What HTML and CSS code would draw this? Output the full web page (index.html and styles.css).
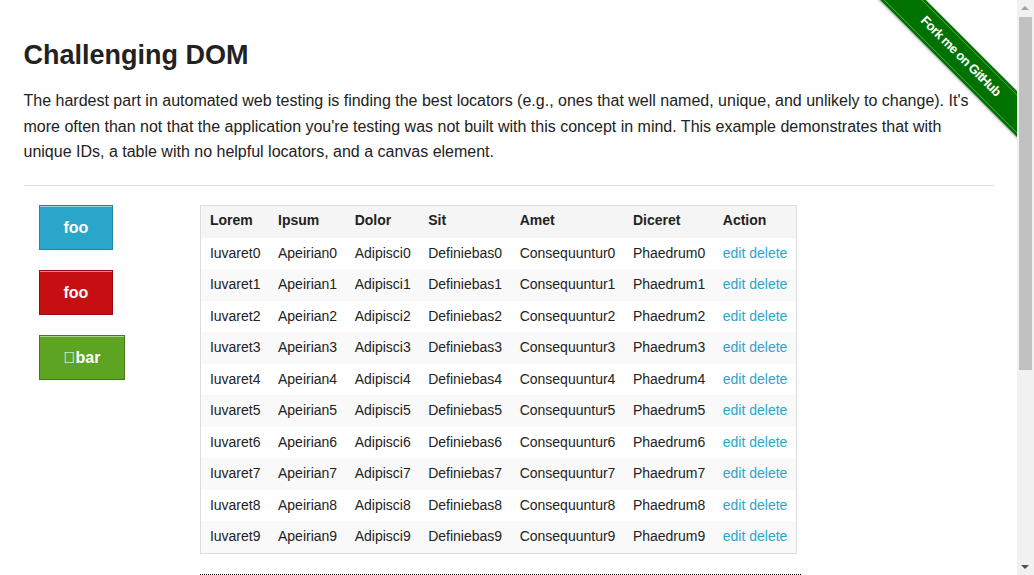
FILE: index.html
```html
<!DOCTYPE html>
<html lang="en">
<head>
<meta charset="utf-8">
<title>The Internet</title>
<link rel="stylesheet" href="styles.css">
</head>
<body>
<div class="viewport">
  <a class="ribbon-wrap" href="#"><span class="ribbon">Fork me on GitHub</span></a>
  <div class="page">
    <div class="content">
      <h3 class="title">Challenging DOM</h3>
      <p class="intro">The hardest part in automated web testing is finding the best locators (e.g., ones that well named, unique, and unlikely to change). It's more often than not that the application you're testing was not built with this concept in mind. This example demonstrates that with unique IDs, a table with no helpful locators, and a canvas element.</p>
      <hr class="rule">
      <div class="split">
        <div class="buttons">
          <a class="button" href="#">foo</a>
          <a class="button alert" href="#">foo</a>
          <a class="button success" href="#">&#xE000;bar</a>
        </div>
        <div class="main">
          <table class="grid">
            <thead>
              <tr><th>Lorem</th><th>Ipsum</th><th>Dolor</th><th>Sit</th><th>Amet</th><th>Diceret</th><th>Action</th></tr>
            </thead>
            <tbody>
              <tr><td>Iuvaret0</td><td>Apeirian0</td><td>Adipisci0</td><td>Definiebas0</td><td>Consequuntur0</td><td>Phaedrum0</td><td><a href="#">edit</a> <a href="#">delete</a></td></tr>
              <tr><td>Iuvaret1</td><td>Apeirian1</td><td>Adipisci1</td><td>Definiebas1</td><td>Consequuntur1</td><td>Phaedrum1</td><td><a href="#">edit</a> <a href="#">delete</a></td></tr>
              <tr><td>Iuvaret2</td><td>Apeirian2</td><td>Adipisci2</td><td>Definiebas2</td><td>Consequuntur2</td><td>Phaedrum2</td><td><a href="#">edit</a> <a href="#">delete</a></td></tr>
              <tr><td>Iuvaret3</td><td>Apeirian3</td><td>Adipisci3</td><td>Definiebas3</td><td>Consequuntur3</td><td>Phaedrum3</td><td><a href="#">edit</a> <a href="#">delete</a></td></tr>
              <tr><td>Iuvaret4</td><td>Apeirian4</td><td>Adipisci4</td><td>Definiebas4</td><td>Consequuntur4</td><td>Phaedrum4</td><td><a href="#">edit</a> <a href="#">delete</a></td></tr>
              <tr><td>Iuvaret5</td><td>Apeirian5</td><td>Adipisci5</td><td>Definiebas5</td><td>Consequuntur5</td><td>Phaedrum5</td><td><a href="#">edit</a> <a href="#">delete</a></td></tr>
              <tr><td>Iuvaret6</td><td>Apeirian6</td><td>Adipisci6</td><td>Definiebas6</td><td>Consequuntur6</td><td>Phaedrum6</td><td><a href="#">edit</a> <a href="#">delete</a></td></tr>
              <tr><td>Iuvaret7</td><td>Apeirian7</td><td>Adipisci7</td><td>Definiebas7</td><td>Consequuntur7</td><td>Phaedrum7</td><td><a href="#">edit</a> <a href="#">delete</a></td></tr>
              <tr><td>Iuvaret8</td><td>Apeirian8</td><td>Adipisci8</td><td>Definiebas8</td><td>Consequuntur8</td><td>Phaedrum8</td><td><a href="#">edit</a> <a href="#">delete</a></td></tr>
              <tr><td>Iuvaret9</td><td>Apeirian9</td><td>Adipisci9</td><td>Definiebas9</td><td>Consequuntur9</td><td>Phaedrum9</td><td><a href="#">edit</a> <a href="#">delete</a></td></tr>
            </tbody>
          </table>
          <div class="canvas"></div>
        </div>
      </div>
    </div>
    <div class="footer">
      <hr class="rule">
      <div class="powered">Powered by <a href="#">Elemental Selenium</a></div>
    </div>
  </div>
</div>
<div class="scrollbar">
  <div class="arrow up"></div>
  <div class="track"><div class="thumb"></div></div>
  <div class="arrow down"></div>
</div>
</body>
</html>
```

FILE: styles.css
```css
html, body {
  margin: 0;
  padding: 0;
}
html {
  overflow: hidden;
}
body {
  font-family: "Liberation Sans", Arial, sans-serif;
  color: #222;
  background: #fff;
  font-size: 16px;
}
a {
  color: #2ba6cb;
  text-decoration: none;
}
.viewport {
  position: relative;
  margin-right: 17px;
}
.page {
  max-width: 1000px;
  margin: 0 auto;
  padding-top: 37px;
  padding-bottom: 34px;
}
.content {
  padding: 0 15px;
}
.title {
  font-size: 27px;
  font-weight: bold;
  line-height: 1.4;
  margin: 0 0 13.5px;
  color: #222;
}
.intro {
  margin: 0 0 20px;
  line-height: 1.6;
}
.rule {
  border: 0;
  border-top: 1px solid #ddd;
  height: 0;
  margin: 0 0 19px;
}
.split {
  display: grid;
  grid-template-columns: 1fr 5fr;
}
.buttons {
  padding: 0 15px;
  display: flex;
  flex-direction: column;
  align-items: flex-start;
  gap: 20px;
}
.main {
  padding: 0 15px;
}
.button {
  display: inline-block;
  padding: 12.5px 24px 12.5px;
  line-height: 18px;
  font-size: 16px;
  font-weight: bold;
  color: #fff;
  background: #2ba6cb;
  border: 1px solid #2284a1;
  box-shadow: inset 0 1px 0 rgba(255, 255, 255, 0.5);
}
.button.alert {
  background: #c60f13;
  border-color: #970b0e;
}
.button.success {
  background: #5da423;
  border-color: #457a1a;
}
.grid {
  border-collapse: collapse;
  border-spacing: 0;
  border: 1px solid #ddd;
  background: #fff;
  margin-bottom: 20px;
}
.grid th,
.grid td {
  font-size: 14px;
  line-height: 15.75px;
  text-align: left;
  color: #222;
  white-space: nowrap;
}
.grid th {
  padding: 7px 8.75px 8.75px;
  font-weight: bold;
}
.grid thead {
  background: #f5f5f5;
}
.grid td {
  padding: 8.375px 8.75px 7.375px;
}
.grid tbody tr:nth-child(even) {
  background: #f9f9f9;
}
.grid td a {
  color: #2ba6cb;
}
.canvas {
  width: 599px;
  height: 200px;
  border: 1px dotted #000;
  margin-bottom: 5px;
}
.footer {
  width: 333px;
  margin: 0 auto;
  padding-top: 20px;
}
.powered {
  text-align: center;
  line-height: 1.6;
}
.ribbon-wrap {
  position: absolute;
  top: 0;
  right: 0;
  width: 149px;
  height: 149px;
  overflow: hidden;
  z-index: 5;
}
.ribbon {
  position: absolute;
  left: -23.5px;
  top: 41px;
  width: 230px;
  height: 32px;
  box-sizing: border-box;
  transform: rotate(45deg);
  background: #007200;
  border-top: 2px solid #007200;
  border-bottom: 2px solid #007200;
  box-shadow: inset 0 1px 0 rgba(255, 255, 255, 0.35), inset 0 -1px 0 rgba(255, 255, 255, 0.35), -1px 1px 3px rgba(0, 0, 0, 0.35);
  color: #fff;
  font-family: "Liberation Sans", Arial, sans-serif;
  font-weight: bold;
  font-size: 13px;
  letter-spacing: -0.6px;
  line-height: 26px;
  text-align: center;
  white-space: nowrap;
}
.scrollbar {
  position: fixed;
  top: 0;
  right: 0;
  width: 17px;
  height: 100vh;
  background: #f1f1f1;
  display: flex;
  flex-direction: column;
}
.arrow {
  height: 17px;
  flex: none;
  position: relative;
}
.arrow::after {
  content: "";
  position: absolute;
  left: 4px;
  width: 0;
  height: 0;
  border-left: 4px solid transparent;
  border-right: 4px solid transparent;
}
.arrow.up::after {
  top: 6px;
  border-bottom: 4px solid #a3a3a3;
}
.arrow.down::after {
  top: 7px;
  border-top: 4px solid #505050;
}
.track {
  flex: 1;
  padding: 0 2px;
}
.thumb {
  height: 353px;
  background: #c1c1c1;
}
```
